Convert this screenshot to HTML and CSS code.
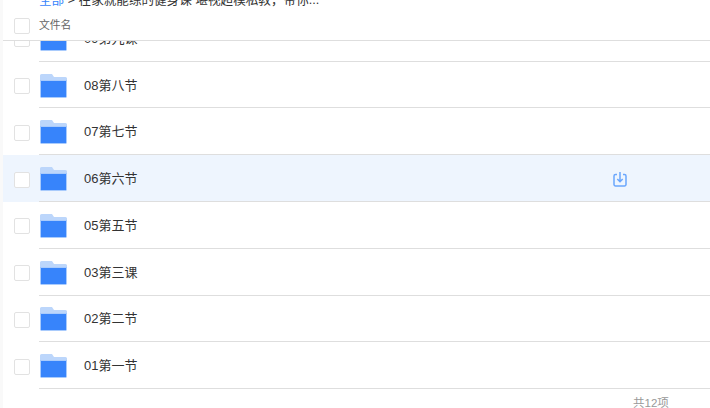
FILE: index.html
```html
<!DOCTYPE html>
<html>
	<head>
		<meta charset="UTF-8" />
		<link rel="stylesheet" href="styles.css">
	</head>
	<body>
	<div class="main">
		<div class="crumb"><a class="crumb-link">全部</a> &gt; 在家就能练的健身课 堪视超模私教，带你...</div>
		<div class="head">
			<span class="check"></span>
			<span class="head-name">文件名</span>
		</div>
		<div class="list-wrap">
			<div class="list">
				<div class="row">
					<span class="check"></span>
					<div class="row-body">
						<svg class="folder" viewBox="0 0 27 24"><path class="folder-back" d="M0 1.500A1.500 1.500 0 0 1 1.500 0H12l2 3h11.500A1.500 1.500 0 0 1 27 4.500V8H0z"/><path class="folder-front" d="M.5 6.500h26V22.500a1 1 0 0 1-1 1h-24a1 1 0 0 1-1-1z"/></svg>
						<span class="name">09第九课</span>
					</div>
				</div>
				<div class="row">
					<span class="check"></span>
					<div class="row-body">
						<svg class="folder" viewBox="0 0 27 24"><path class="folder-back" d="M0 1.500A1.500 1.500 0 0 1 1.500 0H12l2 3h11.500A1.500 1.500 0 0 1 27 4.500V8H0z"/><path class="folder-front" d="M.5 6.500h26V22.500a1 1 0 0 1-1 1h-24a1 1 0 0 1-1-1z"/></svg>
						<span class="name">08第八节</span>
					</div>
				</div>
				<div class="row">
					<span class="check"></span>
					<div class="row-body">
						<svg class="folder" viewBox="0 0 27 24"><path class="folder-back" d="M0 1.500A1.500 1.500 0 0 1 1.500 0H12l2 3h11.500A1.500 1.500 0 0 1 27 4.500V8H0z"/><path class="folder-front" d="M.5 6.500h26V22.500a1 1 0 0 1-1 1h-24a1 1 0 0 1-1-1z"/></svg>
						<span class="name">07第七节</span>
					</div>
				</div>
				<div class="row row-active">
					<span class="check"></span>
					<div class="row-body">
						<svg class="folder" viewBox="0 0 27 24"><path class="folder-back" d="M0 1.500A1.500 1.500 0 0 1 1.500 0H12l2 3h11.500A1.500 1.500 0 0 1 27 4.500V8H0z"/><path class="folder-front" d="M.5 6.500h26V22.500a1 1 0 0 1-1 1h-24a1 1 0 0 1-1-1z"/></svg>
						<span class="name">06第六节</span>
						<svg class="save" viewBox="0 0 14 15"><path d="M4 2.500H2.500A1.500 1.500 0 0 0 1 4v8.500A1.500 1.500 0 0 0 2.500 14h9a1.500 1.500 0 0 0 1.500-1.500V4a1.500 1.500 0 0 0-1.500-1.500H10"/><path d="M7 0v9.500M4.300 7 7 9.700 9.700 7"/></svg>
					</div>
				</div>
				<div class="row">
					<span class="check"></span>
					<div class="row-body">
						<svg class="folder" viewBox="0 0 27 24"><path class="folder-back" d="M0 1.500A1.500 1.500 0 0 1 1.500 0H12l2 3h11.500A1.500 1.500 0 0 1 27 4.500V8H0z"/><path class="folder-front" d="M.5 6.500h26V22.500a1 1 0 0 1-1 1h-24a1 1 0 0 1-1-1z"/></svg>
						<span class="name">05第五节</span>
					</div>
				</div>
				<div class="row">
					<span class="check"></span>
					<div class="row-body">
						<svg class="folder" viewBox="0 0 27 24"><path class="folder-back" d="M0 1.500A1.500 1.500 0 0 1 1.500 0H12l2 3h11.500A1.500 1.500 0 0 1 27 4.500V8H0z"/><path class="folder-front" d="M.5 6.500h26V22.500a1 1 0 0 1-1 1h-24a1 1 0 0 1-1-1z"/></svg>
						<span class="name">03第三课</span>
					</div>
				</div>
				<div class="row">
					<span class="check"></span>
					<div class="row-body">
						<svg class="folder" viewBox="0 0 27 24"><path class="folder-back" d="M0 1.500A1.500 1.500 0 0 1 1.500 0H12l2 3h11.500A1.500 1.500 0 0 1 27 4.500V8H0z"/><path class="folder-front" d="M.5 6.500h26V22.500a1 1 0 0 1-1 1h-24a1 1 0 0 1-1-1z"/></svg>
						<span class="name">02第二节</span>
					</div>
				</div>
				<div class="row">
					<span class="check"></span>
					<div class="row-body">
						<svg class="folder" viewBox="0 0 27 24"><path class="folder-back" d="M0 1.500A1.500 1.500 0 0 1 1.500 0H12l2 3h11.500A1.500 1.500 0 0 1 27 4.500V8H0z"/><path class="folder-front" d="M.5 6.500h26V22.500a1 1 0 0 1-1 1h-24a1 1 0 0 1-1-1z"/></svg>
						<span class="name">01第一节</span>
					</div>
				</div>
			</div>
		</div>
		<div class="total">共12项</div>
	</div>
	</body>
</html>
```

FILE: styles.css
```css
html, body {
	margin: 0;
	height: 100%;
	overflow: hidden;
	background: #fff;
}

body {
	font-family: "Liberation Sans", "Noto Sans CJK SC", sans-serif;
	border-left: 3px solid #f9f9f9;
	box-sizing: border-box;
}

.main {
	display: flex;
	flex-direction: column;
	height: 408px;
}

.crumb {
	height: 19px;
	flex-shrink: 0;
	margin-top: -8px;
	padding-left: 36px;
	font-size: 12.6px;
	line-height: 16px;
	color: #333;
}

.crumb-link {
	color: #3784fb;
}

.head {
	display: flex;
	align-items: center;
	height: 29px;
	flex-shrink: 0;
	padding-left: 11px;
}

.head-name {
	margin-left: 9px;
	margin-bottom: 3px;
	font-size: 10.8px;
	color: #666;
}

.check {
	display: block;
	width: 14px;
	height: 14px;
	flex-shrink: 0;
	background: #fff;
	border: 1px solid #e2e2e2;
	border-radius: 2px;
}

.list-wrap {
	height: 349px;
	flex-shrink: 0;
	overflow: hidden;
	border-top: 1px solid #dedede;
	box-sizing: border-box;
}

.list {
	margin-top: -26.2px;
}

.row {
	display: flex;
	align-items: center;
	height: 46.8px;
	padding-left: 11px;
	box-sizing: border-box;
}

.row .check {
	margin-top: 2px;
}

.row-active {
	background: #eef5fe;
}

.row-body {
	display: flex;
	align-items: center;
	align-self: stretch;
	flex: 1;
	margin-left: 9px;
	padding-top: 2px;
	border-bottom: 1px solid #dedede;
}

.folder {
	width: 27px;
	height: 24px;
	margin-left: 1px;
	flex-shrink: 0;
}

.folder-back {
	fill: #bcd6fb;
}

.folder-front {
	fill: #3784fb;
	stroke: #a9cbfc;
}

.name {
	margin-left: 17px;
	margin-bottom: 3px;
	font-size: 13px;
	color: #333;
}

.save {
	width: 14px;
	height: 15px;
	margin-left: 476px;
	fill: none;
	stroke: #6aa6fd;
	stroke-width: 1.5;
}

.total {
	flex-shrink: 0;
	padding-left: 630px;
	font-size: 11.5px;
	line-height: 28px;
	color: #999;
}
```
